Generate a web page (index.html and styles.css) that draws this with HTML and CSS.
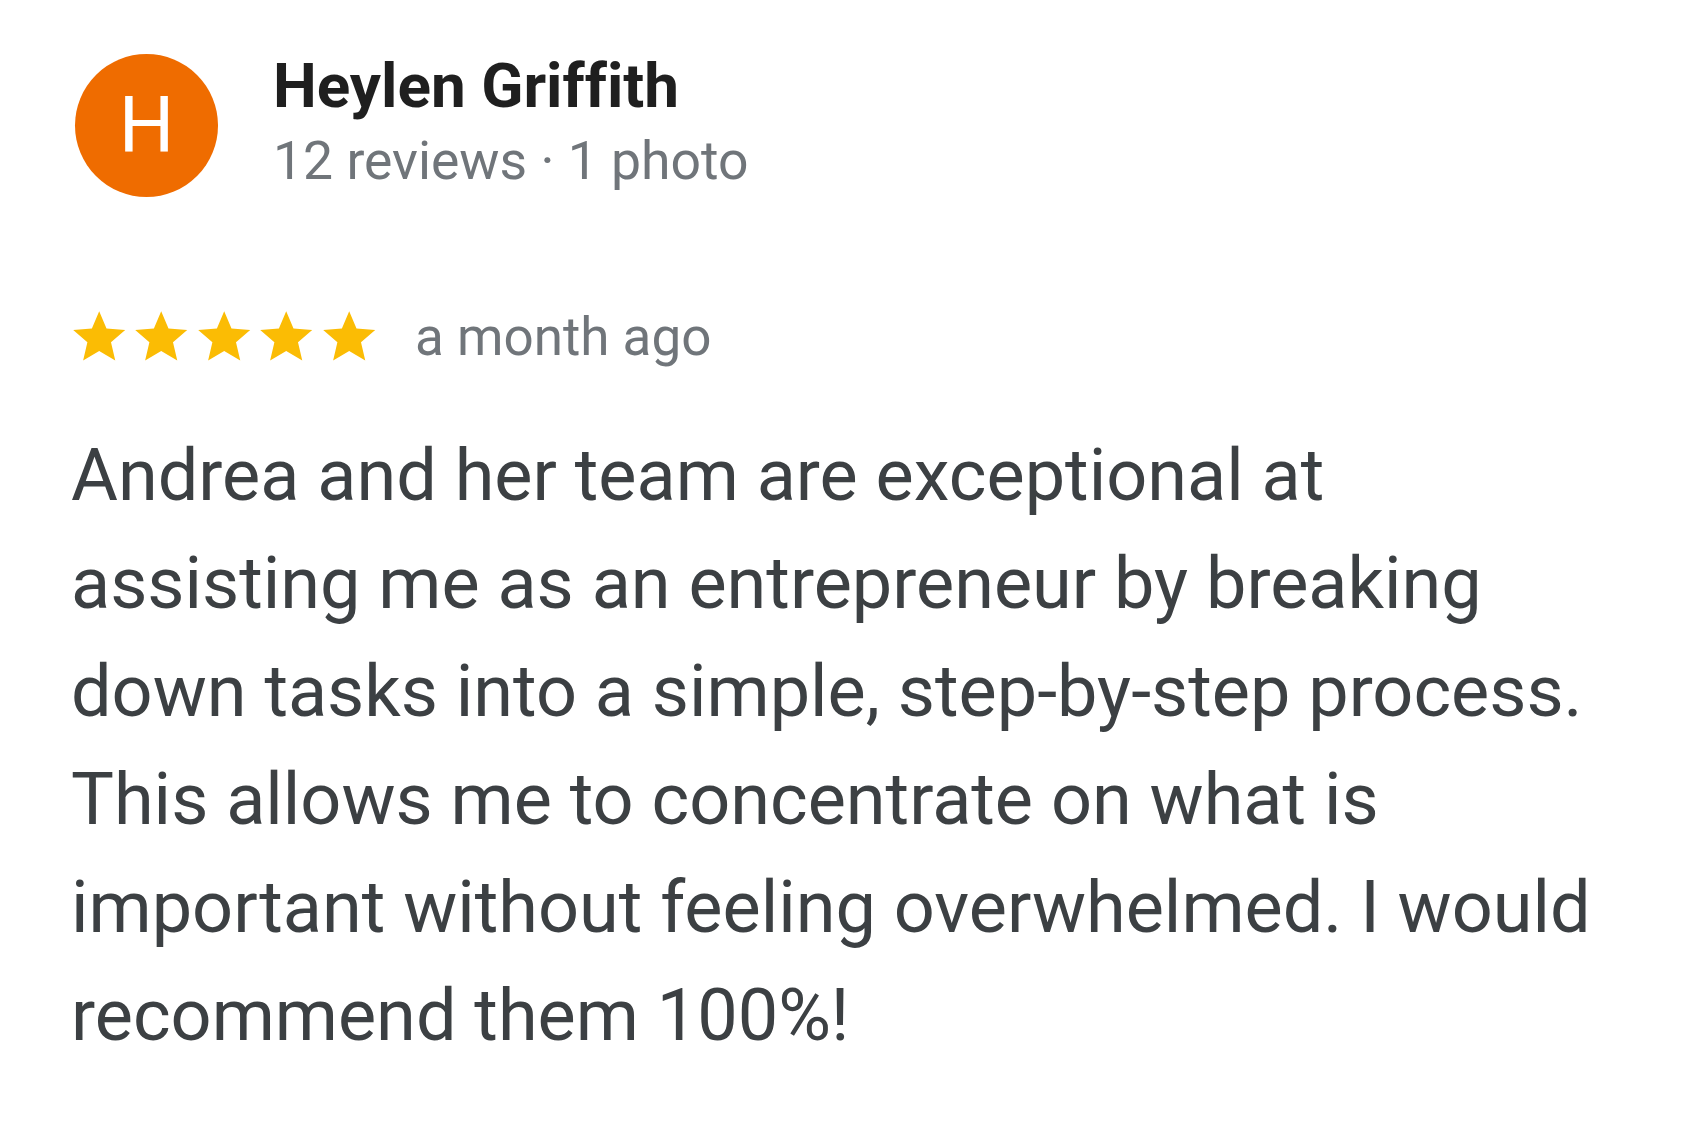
FILE: index.html
```html
<!DOCTYPE html>
<html lang="en">
<head>
<meta charset="utf-8">
<title>Review</title>
<link rel="stylesheet" href="styles.css">
</head>
<body>
<div class="review">
  <div class="header">
    <div class="avatar">H</div>
    <div class="who">
      <div class="name">Heylen Griffith</div>
      <div class="meta">12 reviews · 1 photo</div>
    </div>
  </div>
  <div class="rating">
    <div class="stars">
      <svg class="star" viewBox="0 0 24 24"><path d="M12 17.27L18.18 21l-1.64-7.03L22 9.24l-7.19-.61L12 2 9.19 8.63 2 9.24l5.46 4.73L5.82 21z"/></svg>
      <svg class="star" viewBox="0 0 24 24"><path d="M12 17.27L18.18 21l-1.64-7.03L22 9.24l-7.19-.61L12 2 9.19 8.63 2 9.24l5.46 4.73L5.82 21z"/></svg>
      <svg class="star" viewBox="0 0 24 24"><path d="M12 17.27L18.18 21l-1.64-7.03L22 9.24l-7.19-.61L12 2 9.19 8.63 2 9.24l5.46 4.73L5.82 21z"/></svg>
      <svg class="star" viewBox="0 0 24 24"><path d="M12 17.27L18.18 21l-1.64-7.03L22 9.24l-7.19-.61L12 2 9.19 8.63 2 9.24l5.46 4.73L5.82 21z"/></svg>
      <svg class="star" viewBox="0 0 24 24"><path d="M12 17.27L18.18 21l-1.64-7.03L22 9.24l-7.19-.61L12 2 9.19 8.63 2 9.24l5.46 4.73L5.82 21z"/></svg>
    </div>
    <span class="when">a month ago</span>
  </div>
  <p class="text">Andrea and her team are exceptional at assisting me as an entrepreneur by breaking down tasks into a simple, step-by-step process. This allows me to concentrate on what is important without feeling overwhelmed. I would recommend them 100%!</p>
</div>
</body>
</html>
```
FILE: styles.css
```css
html, body {
  margin: 0;
  padding: 0;
  background: #ffffff;
}
body {
  font-family: Roboto, "Noto Sans", Arial, sans-serif;
  font-variant-ligatures: none;
}
.review {
  padding: 52px 0 0 68px;
}
.header {
  display: flex;
  align-items: flex-start;
}
.avatar {
  width: 143px;
  height: 143px;
  margin: 2px 0 0 7px;
  border-radius: 50%;
  background: #ef6c00;
  color: #ffffff;
  font-size: 78px;
  line-height: 143px;
  text-align: center;
  font-weight: 400;
  flex: none;
}
.who {
  margin-left: 55px;
}
.name {
  font-size: 62px;
  line-height: 68px;
  font-weight: 700;
  color: #1f1f1f;
}
.meta {
  margin-top: 11px;
  font-size: 53.5px;
  line-height: 60px;
  color: #70757a;
}
.rating {
  display: flex;
  align-items: center;
  margin-top: 109px;
  height: 62px;
}
.stars {
  display: flex;
}
.star {
  width: 62.4px;
  height: 62.4px;
  fill: #fbbc04;
  display: block;
}
.when {
  margin-left: 35px;
  font-size: 53px;
  line-height: 62px;
  color: #70757a;
}
.text {
  margin: 54px 0 0 3px;
  width: 1535px;
  font-size: 72px;
  line-height: 108px;
  color: #3c4043;
}
```
